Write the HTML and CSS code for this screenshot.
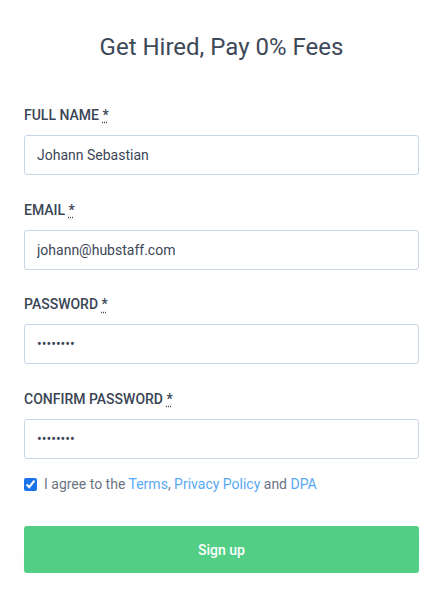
FILE: index.html
```html
<!DOCTYPE html>
<html lang="en">
<head>
<meta charset="utf-8">
<title>Get Hired, Pay 0% Fees</title>
<link rel="stylesheet" href="styles.css">
</head>
<body>
<main class="card">
  <h1 class="title">Get Hired, Pay 0% Fees</h1>
  <form class="form">
    <div class="fields">
      <div class="field">
        <label class="label" for="name">FULL NAME <abbr title="required">*</abbr></label>
        <input class="input" id="name" type="text" value="Johann Sebastian">
      </div>
      <div class="field">
        <label class="label" for="email">EMAIL <abbr title="required">*</abbr></label>
        <input class="input" id="email" type="email" value="johann@hubstaff.com">
      </div>
      <div class="field">
        <label class="label" for="pw">PASSWORD <abbr title="required">*</abbr></label>
        <input class="input" id="pw" type="password" value="12345678">
      </div>
      <div class="field">
        <label class="label" for="pw2">CONFIRM PASSWORD <abbr title="required">*</abbr></label>
        <input class="input" id="pw2" type="password" value="12345678">
      </div>
    </div>
    <label class="agree">
      <input class="check" type="checkbox" checked>
      <span>I agree to the <a href="#">Terms</a>, <a href="#">Privacy Policy</a> and <a href="#">DPA</a></span>
    </label>
    <button class="btn" type="button">Sign up</button>
  </form>
</main>
</body>
</html>
```

FILE: styles.css
```css
* { box-sizing: border-box; }
html, body { margin: 0; background: #fff; }
body {
  font-family: Roboto, "Noto Sans", Arial, sans-serif;
  color: #3b4656;
}
.card {
  padding: 31px 25px 0 24px;
}
.title {
  margin: 0;
  text-align: center;
  font-size: 24px;
  font-weight: 400;
  line-height: 32px;
  color: #3d4858;
}
.form {
  margin-top: 44px;
  display: flex;
  flex-direction: column;
}
.fields {
  display: flex;
  flex-direction: column;
  gap: 26.7px;
}
.field {
  display: flex;
  flex-direction: column;
}
.label {
  font-size: 14px;
  font-weight: 500;
  line-height: 16px;
  color: #3a4555;
  margin-bottom: 12px;
}
.label abbr {
  text-decoration: underline dotted;
  text-underline-offset: 2px;
  cursor: help;
}
.input {
  height: 40px;
  width: 100%;
  border: 1px solid #c8d5e6;
  border-radius: 3px;
  padding: 0 12px;
  font-family: inherit;
  font-size: 14px;
  color: #3b4656;
  background: #fff;
  outline: none;
}
.agree {
  display: flex;
  align-items: center;
  gap: 7px;
  margin-top: 17px;
  font-size: 14px;
  color: #6b7585;
}
.check {
  margin: 0;
  width: 13px;
  height: 13px;
  accent-color: #1a73e8;
}
.agree a {
  color: #58a9f3;
  text-decoration: none;
}
.btn {
  margin-top: 34px;
  height: 47px;
  width: 100%;
  border: 0;
  border-radius: 3px;
  background: #52cf84;
  color: #fff;
  font-family: inherit;
  font-size: 14px;
  font-weight: 500;
  box-shadow: 0 20px 18px -12px rgba(82, 207, 132, 0.5);
  cursor: pointer;
}
```
